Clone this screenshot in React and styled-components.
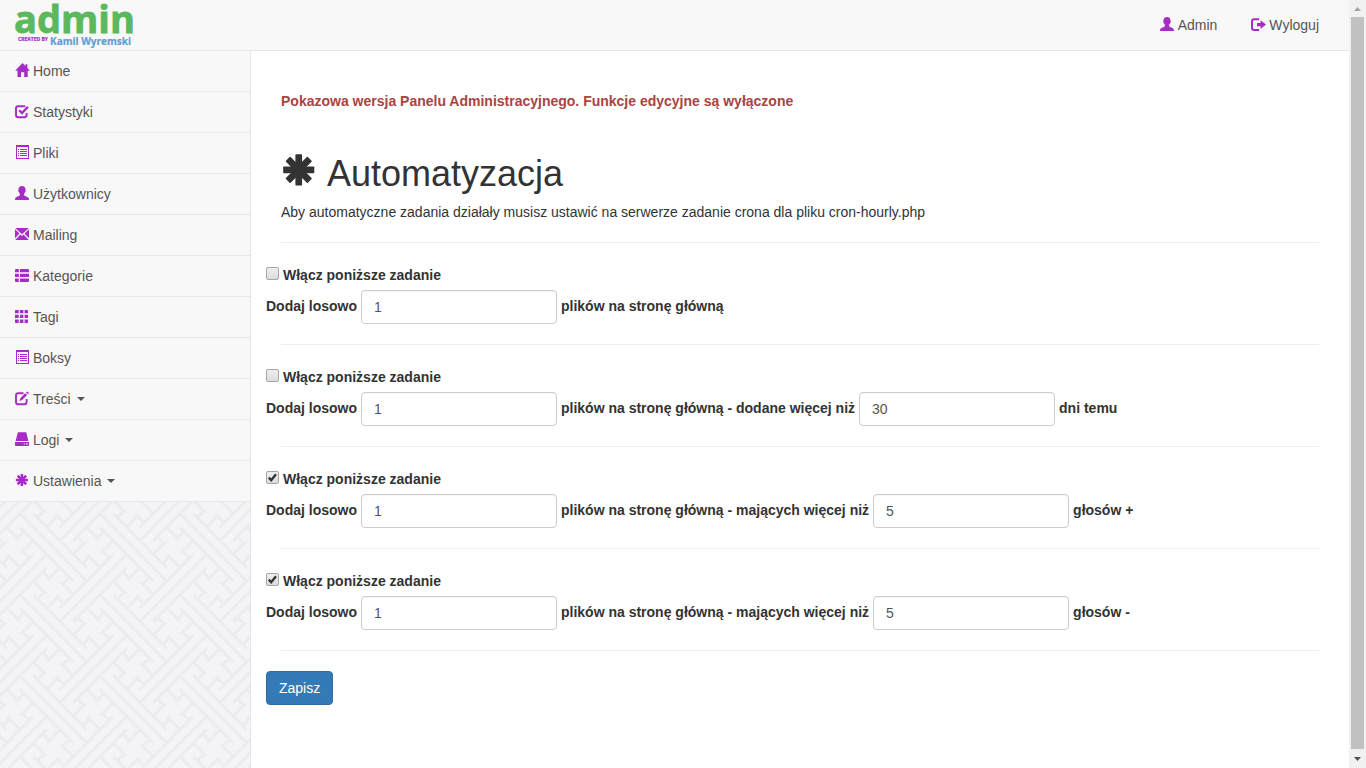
import React, { Fragment } from "react";
import styled, { createGlobalStyle } from "styled-components";

const svgUrl = (svg) => `url("data:image/svg+xml,${encodeURIComponent(svg)}")`;

/* Diagonal key-fret weave: three-line bundles crossing, with hooks in the squares between them. */
const weaveLines =
  "M-5 0H5M-4 -1H4M-4 1H4M6 -5V5M5 -4V4M7 -4V4" +
  "M2 1V2.9M5 2H3.1M4 5V3.1M1 4H2.9M3.4 1V1.8M5 3.4H4.2M2.6 5V4.2M1 2.6H1.8" +
  "M2 -1V-2.9M5 -2H3.1M4 -5V-3.1M1 -4H2.9M3.4 -1V-1.8M5 -3.4H4.2M2.6 -5V-4.2M1 -2.6H1.8";
const weaveCopies = [-240, 0, 240]
  .flatMap((x) => [-240, 0, 240].map((y) => `<use href="#w" x="${x}" y="${y}"/>`))
  .join("");
const weave = svgUrl(
  `<svg xmlns="http://www.w3.org/2000/svg" width="80" height="81" viewBox="0 0 240 240" preserveAspectRatio="none"><defs><g id="w"><path transform="matrix(20 20 -20 20 160 170)" d="${weaveLines}"/></g></defs><g fill="none" stroke="#ececee" stroke-width="0.32">${weaveCopies}</g></svg>`
);
const tick = svgUrl(
  `<svg xmlns="http://www.w3.org/2000/svg" viewBox="0 0 11 11"><path d="M1.8 5.6L4.2 8.2L9 2.3" fill="none" stroke="#333" stroke-width="2.3"/></svg>`
);

const GlobalStyle = createGlobalStyle`
  *, *::before, *::after { box-sizing: border-box; }
  body {
    margin: 0;
    background: #fff;
    color: #333;
    font-family: "Liberation Sans", Arial, sans-serif;
    font-size: 14px;
    line-height: 20px;
  }
`;

const Shell = styled.div`
  display: flex;
  min-height: 100vh;
`;
const Page = styled.div`
  flex: 1;
  min-width: 0;
  display: flex;
  flex-direction: column;
`;
const Header = styled.header`
  display: flex;
  justify-content: space-between;
  align-items: center;
  height: 51px;
  padding: 0 30px 0 15px;
  background: #f8f8f8;
  border-bottom: 1px solid #e7e7e7;
`;
const LogoLink = styled.a`
  display: flex;
`;
const UserNav = styled.nav`
  display: flex;
  gap: 34px;
`;
const NavLink = styled.a`
  display: flex;
  align-items: center;
  gap: 4px;
  color: #555;
  text-decoration: none;
`;
const Body = styled.div`
  flex: 1;
  display: flex;
`;
const Sidebar = styled.nav`
  flex: 0 0 251px;
  border-right: 1px solid #e7e7e7;
  background: #f4f4f6 ${weave} 0 34px / 80px 81px;
`;
const Menu = styled.ul`
  margin: 0;
  padding: 0;
  list-style: none;
`;
const MenuItem = styled.li`
  padding: 10px 15px;
  background: #f8f8f8;
  border-bottom: 1px solid #e7e7e7;
`;
const Caret = styled.span`
  margin-left: 2px;
  border-top: 4px solid #555;
  border-right: 4px solid transparent;
  border-left: 4px solid transparent;
`;
const Glyph = styled.svg`
  width: ${(p) => p.$size || 14}px;
  height: ${(p) => p.$size || 14}px;
  flex: none;
  margin-bottom: ${(p) => p.$lift || 2}px;
  fill: ${(p) => p.$color || "#a52cc6"};
  overflow: visible;
`;
const Main = styled.main`
  flex: 1;
  min-width: 0;
  padding: 40px 30px;
`;
const Notice = styled.p`
  margin: 0 0 43px;
  color: #a94442;
  font-weight: 700;
`;
const Title = styled.h1`
  display: flex;
  align-items: center;
  gap: 10px;
  height: 40px;
  margin: 0 0 8px;
  font-size: 36px;
  line-height: 40px;
  font-weight: 400;
`;
const Intro = styled.p`
  margin: 0;
`;
const Divider = styled.hr`
  margin: 20px 0;
  border: 0;
  border-top: 1px solid #eee;
`;
const Task = styled.section`
  margin: 0 -15px;
  font-weight: 700;
`;
const Toggle = styled.label`
  display: flex;
  align-items: center;
  gap: 4px;
  margin-bottom: 3px;
  line-height: 24px;
`;
const Checkbox = styled.input`
  appearance: none;
  width: 13px;
  height: 13px;
  margin: 0 0 4px;
  border: 1px solid #a6a6a6;
  border-radius: 2px;
  background: linear-gradient(#eee, #ddd);
  &:checked {
    background: ${tick} center / 11px 11px no-repeat, linear-gradient(#eee, #ddd);
  }
`;
const Fields = styled.div`
  display: flex;
  align-items: center;
  gap: 4px;
`;
const FieldLabel = styled.label`
  margin-bottom: 2px;
`;
const TextBox = styled.input`
  width: 196px;
  height: 34px;
  padding: 6px 12px;
  border: 1px solid #ccc;
  border-radius: 4px;
  background: #fff;
  box-shadow: inset 0 1px 1px rgba(0, 0, 0, 0.04);
  color: #555;
  font: 14px/20px "Liberation Sans", Arial, sans-serif;
`;
const SaveButton = styled.button`
  margin-left: -15px;
  padding: 6px 12px;
  border: 1px solid #2e6da4;
  border-radius: 4px;
  background: #337ab7;
  color: #fff;
  font: 14px/20px "Liberation Sans", Arial, sans-serif;
`;
const Scrollbar = styled.div`
  position: sticky;
  top: 0;
  flex: 0 0 17px;
  height: 100vh;
  display: flex;
  flex-direction: column;
  background: #f1f1f1;
`;
const ScrollArrow = styled.svg`
  flex: none;
  width: 17px;
  height: 17px;
  fill: ${(p) => p.$color};
`;
const Thumb = styled.div`
  flex: 1;
  margin: 0 2px 2px;
  background: #c1c1c1;
`;

const spokes = [0, 45, 90, 135].map((a) => (
  <rect key={a} x="5.6" y="0.9" width="2.6" height="12.1" rx="0.3" transform={`rotate(${a} 6.9 6.95)`} />
));

const glyphs = {
  home: <path d="M7.5 0L10.5 3.1V1.2H12.4V5.1L14.9 7.7H12.7V14H9.2V9.2H6V14H2.5V7.7H.2z" />,
  check: (
    <>
      <path d="M10.2 2.2H3.3Q1 2.2 1 4.5V11Q1 13.3 3.3 13.3H9.3Q11.6 13.3 11.6 11V9" fill="none" stroke="#a52cc6" strokeWidth="1.9" />
      <path d="M4.2 6.3L7 9.1L12.9 2.8" fill="none" stroke="#a52cc6" strokeWidth="2.3" />
    </>
  ),
  listAlt: (
    <path fillRule="evenodd" d="M1 0H14V14H1zM2 2V13H13V2zM3 4H4V5H3zM5 4H12V5H5zM3 6H4V7H3zM5 6H12V7H5zM3 8H4V9H3zM5 8H12V9H5zM3 10H4V11H3zM5 10H12V11H5z" />
  ),
  user: <path d="M7 0C9.2 0 10.5 1.4 10.5 3.4C10.5 4.1 10.9 4.1 10.7 5C10.5 5.9 10.2 6 9.9 6.6C9.5 7.5 9 7.9 9 8.7C9 10.4 13.9 10.3 13.9 12.8V14H.1V12.8C.1 10.3 5 10.4 5 8.7C5 7.9 4.5 7.5 4.1 6.6C3.8 6 3.5 5.9 3.3 5C3.1 4.1 3.5 4.1 3.5 3.4C3.5 1.4 4.8 0 7 0z" />,
  envelope: <path d="M.2 1H13.8L7 7.2zM0 2.2L4.5 6.5L0 11.3zM14 2.2V11.3L9.5 6.5zM5.4 7.4L7 8.9L8.6 7.4L13.8 13H.2z" />,
  thList: <path d="M.7 1H3.8V4.2H0V1.7zM5 1H13.3L14 1.7V4.2H5zM0 5.8H3.8V9H0zM5 5.8H14V9H5zM0 10.6H3.8V14H.7L0 13.3zM5 10.6H14V13.3L13.3 14H5z" />,
  th: <path d="M.6 1H3.7V4.2H0V1.6zM4.9 1H8.4V4.2H4.9zM9.6 1H12.4L13 1.6V4.2H9.6zM0 5.8H3.7V9H0zM4.9 5.8H8.4V9H4.9zM9.6 5.8H13V9H9.6zM0 10.6H3.7V14H.6L0 13.4zM4.9 10.6H8.4V14H4.9zM9.6 10.6H13V13.4L12.4 14H9.6z" />,
  edit: (
    <>
      <path d="M8.5 2.2H3.3Q1 2.2 1 4.5V11Q1 13.3 3.3 13.3H9.3Q11.6 13.3 11.6 11V8" fill="none" stroke="#a52cc6" strokeWidth="1.9" />
      <path d="M10.2 2.2L12.1 4.1L7.2 9.1L4.5 9.9L5.3 7.2zM11 1.5L12.2 .4L14 2.1L12.9 3.3z" />
    </>
  ),
  hdd: <path fillRule="evenodd" d="M2.9 .2H11.2L13.4 8.9H.6zM0 10H14V13.3Q14 14 13.3 14H.7Q0 14 0 13.3zM8.8 11.5V12.5H9.8V11.5zM10.8 11.5V12.5H12.8V11.5z" />,
  asterisk: spokes,
  logOut: (
    <>
      <path d="M8.2 2.2H3.3Q1 2.2 1 4.5V10.7Q1 13 3.3 13H8.2" fill="none" stroke="#a52cc6" strokeWidth="2" />
      <path d="M6 6H9.6V3.2L15 7.6L9.6 12V9.2H6z" />
    </>
  ),
};

const Icon = ({ name, size, lift, color }) => (
  <Glyph viewBox="0 0 14 14" aria-hidden="true" $size={size} $lift={lift} $color={color}>
    {glyphs[name]}
  </Glyph>
);

const Logo = () => (
  <svg width="124" height="50" viewBox="0 0 124 50" fontFamily="'Open Sans', sans-serif" fontWeight="700">
    <text x="-1" y="33" fontSize="38" fill="#5cb85c" stroke="#5cb85c" strokeWidth="0.8">admin</text>
    <text x="3" y="41" fontSize="5" fill="#a52cc6" stroke="#a52cc6" strokeWidth="0.2">CREATED BY</text>
    <text x="35" y="45" fontSize="10" fill="#5f9fd2" stroke="#5f9fd2" strokeWidth="0.2">Kamil Wyremski</text>
  </svg>
);

const menu = [
  ["home", "Home"],
  ["check", "Statystyki"],
  ["listAlt", "Pliki"],
  ["user", "Użytkownicy"],
  ["envelope", "Mailing"],
  ["thList", "Kategorie"],
  ["th", "Tagi"],
  ["listAlt", "Boksy"],
  ["edit", "Treści", true],
  ["hdd", "Logi", true],
  ["asterisk", "Ustawienia", true],
];

const tasks = [
  { on: false, middle: "plików na stronę główną" },
  { on: false, middle: "plików na stronę główną - dodane więcej niż", value: "30", end: "dni temu" },
  { on: true, middle: "plików na stronę główną - mających więcej niż", value: "5", end: "głosów +" },
  { on: true, middle: "plików na stronę główną - mających więcej niż", value: "5", end: "głosów -" },
];

export default function App() {
  return (
    <Shell>
      <GlobalStyle />
      <Page>
        <Header>
          <LogoLink href="#" aria-label="admin">
            <Logo />
          </LogoLink>
          <UserNav>
            <NavLink href="#"><Icon name="user" />Admin</NavLink>
            <NavLink href="#"><Icon name="logOut" />Wyloguj</NavLink>
          </UserNav>
        </Header>
        <Body>
          <Sidebar>
            <Menu>
              {menu.map(([icon, text, open]) => (
                <MenuItem key={text}>
                  <NavLink href="#">
                    <Icon name={icon} />
                    {text}
                    {open && <Caret />}
                  </NavLink>
                </MenuItem>
              ))}
            </Menu>
          </Sidebar>
          <Main>
            <Notice>Pokazowa wersja Panelu Administracyjnego. Funkcje edycyjne są wyłączone</Notice>
            <Title>
              <Icon name="asterisk" size={36} lift={8} color="#333" />
              Automatyzacja
            </Title>
            <Intro>Aby automatyczne zadania działały musisz ustawić na serwerze zadanie crona dla pliku cron-hourly.php</Intro>
            <form>
              <Divider />
              {tasks.map((t, i) => (
                <Fragment key={i}>
                  <Task>
                    <Toggle>
                      <Checkbox type="checkbox" defaultChecked={t.on} />
                      Włącz poniższe zadanie
                    </Toggle>
                    <Fields>
                      <FieldLabel htmlFor={`count-${i}`}>Dodaj losowo</FieldLabel>
                      <TextBox id={`count-${i}`} defaultValue="1" />
                      <FieldLabel htmlFor={t.value ? `limit-${i}` : `count-${i}`}>{t.middle}</FieldLabel>
                      {t.value && (
                        <>
                          <TextBox id={`limit-${i}`} defaultValue={t.value} />
                          <FieldLabel htmlFor={`limit-${i}`}>{t.end}</FieldLabel>
                        </>
                      )}
                    </Fields>
                  </Task>
                  <Divider />
                </Fragment>
              ))}
              <SaveButton type="button">Zapisz</SaveButton>
            </form>
          </Main>
        </Body>
      </Page>
      <Scrollbar aria-hidden="true">
        <ScrollArrow viewBox="0 0 17 17" $color="#a3a3a3"><path d="M5 11L8.5 7L12 11z" /></ScrollArrow>
        <Thumb />
        <ScrollArrow viewBox="0 0 17 17" $color="#505050"><path d="M5 6L8.5 10L12 6z" /></ScrollArrow>
      </Scrollbar>
    </Shell>
  );
}
